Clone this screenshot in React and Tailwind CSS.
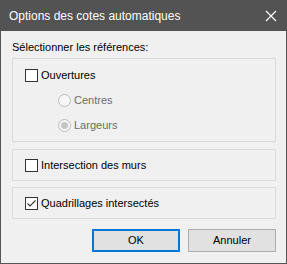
import React from 'react';

const CheckBox = ({ checked }) => (
  <span className="w-[13px] h-[13px] border border-[#333333] bg-white flex items-center justify-center shrink-0">
    {checked && (
      <svg width="11" height="11" viewBox="0 0 11 11">
        <path d="M1.5 5.5 L4 8 L9.5 2.5" fill="none" stroke="#333333" strokeWidth="1.1" />
      </svg>
    )}
  </span>
);

const Radio = ({ checked }) => (
  <span className="w-[13px] h-[13px] rounded-full border border-[#bcbcbc] bg-[#f6f6f6] flex items-center justify-center shrink-0">
    {checked && <span className="w-[7px] h-[7px] rounded-full bg-[#c6c6c6]" />}
  </span>
);

const App = () => {
  return (
    <div className="w-[287px] h-[264px] bg-[#f0f0f0] border-x border-b border-[#555555] flex flex-col text-[11px] text-black font-['Liberation_Sans',sans-serif] leading-none">
      <div className="h-[31px] bg-[#535353] flex items-center justify-between pl-[9px] pr-[10px] -mx-px">
        <span className="text-white text-[12px]">Options des cotes automatiques</span>
        <svg width="12" height="12" viewBox="0 0 12 12">
          <path d="M1 1 L11 11 M11 1 L1 11" stroke="#ffffff" strokeWidth="1.2" />
        </svg>
      </div>

      <div className="pl-[11px] pr-[10px] flex flex-col">
        <div className="mt-[10px] h-[12px] flex items-center">Sélectionner les références:</div>

        <div className="mt-[5px] h-[84px] border border-[#dcdcdc] pl-[12px] pt-[10px] flex flex-col">
          <label className="flex items-center gap-[3px] h-[13px]">
            <CheckBox />
            <span>Ouvertures</span>
          </label>
          <label className="flex items-center gap-[3px] h-[13px] ml-[33px] mt-[12px] text-[#6d6d6d]">
            <Radio />
            <span>Centres</span>
          </label>
          <label className="flex items-center gap-[3px] h-[13px] ml-[33px] mt-[12px] text-[#6d6d6d]">
            <Radio checked />
            <span>Largeurs</span>
          </label>
        </div>

        <div className="mt-[7px] h-[32px] border border-[#dcdcdc] pl-[12px] flex items-center">
          <label className="flex items-center gap-[3px]">
            <CheckBox />
            <span>Intersection des murs</span>
          </label>
        </div>

        <div className="mt-[6px] h-[32px] border border-[#dcdcdc] pl-[12px] flex items-center">
          <label className="flex items-center gap-[3px]">
            <CheckBox checked />
            <span>Quadrillages intersectés</span>
          </label>
        </div>

        <div className="mt-[10px] flex justify-end gap-[8px]">
          <button className="w-[88px] h-[23px] border-2 border-[#0078d7] bg-[#e1e1e1]">OK</button>
          <button className="w-[88px] h-[23px] border border-[#adadad] bg-[#e1e1e1]">Annuler</button>
        </div>
      </div>
    </div>
  );
};

export default App;
